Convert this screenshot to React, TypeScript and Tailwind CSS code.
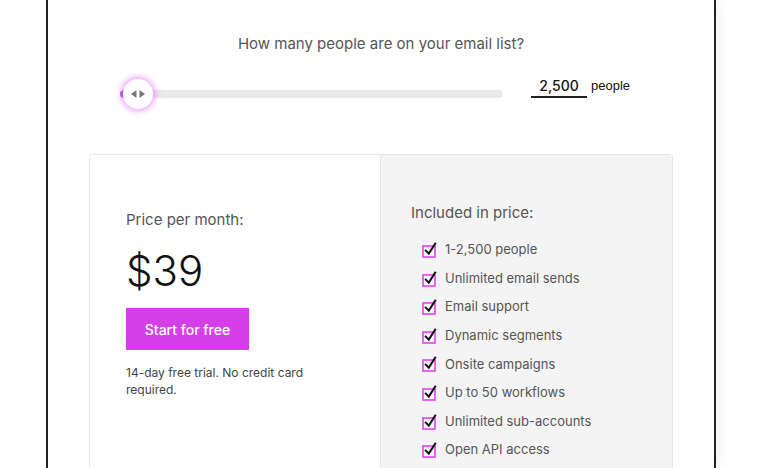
import React from "react";

const items = [
  "1-2,500 people",
  "Unlimited email sends",
  "Email support",
  "Dynamic segments",
  "Onsite campaigns",
  "Up to 50 workflows",
  "Unlimited sub-accounts",
  "Open API access",
];

function Check() {
  return (
    <svg width="16" height="16" viewBox="0 0 16 16" className="shrink-0">
      <rect x="1" y="4" width="12" height="11" fill="none" stroke="#e044ee" strokeWidth="1.6" />
      <path d="M3.8 8.6 L6.8 11.6 L13.2 1.6" fill="none" stroke="#111" strokeWidth="2" strokeLinecap="square" />
    </svg>
  );
}

export default function App() {
  return (
    <div className="w-[760px] h-[468px] overflow-hidden bg-white" style={{ fontFamily: "Inter, 'Noto Sans', sans-serif" }}>
      <div className="ml-[46px] w-[670px] h-[468px] border-x-2 border-[#222] bg-white px-[41px] shadow-[4px_0_10px_rgba(0,0,0,0.05)]">
        <div className="pt-[34px] text-center text-[15px] leading-[20px] text-[#555]">
          How many people are on your email list?
        </div>
        <div className="mt-[21px] flex items-start h-[40px]">
          <div className="relative mt-[15px] ml-[31px] w-[383px] h-[8px] rounded-full bg-[#e9e9e9]">
            <div className="absolute left-0 top-0 h-[8px] w-[10px] rounded-l-full bg-[#9b4dea]" />
            <div className="absolute left-[3px] top-[-11px] w-[30px] h-[30px] rounded-full bg-white shadow-[0_0_6px_2px_rgba(226,120,245,0.7)] flex items-center justify-center gap-[1px]">
              <svg width="16" height="10" viewBox="0 0 16 10">
                <path d="M1 5 L6.5 1 L6.5 9 Z" fill="#777" />
                <path d="M15 5 L9.5 1 L9.5 9 Z" fill="#777" />
              </svg>
            </div>
          </div>
          <div className="ml-[28px] mt-[1px] w-[56px] border-b-2 border-[#222] text-center text-[14px] font-medium leading-[20px] text-[#111]">
            2,500
          </div>
          <div className="ml-[4px] mt-[2px] text-[13px] leading-[17px] text-[#111]" style={{ fontFamily: "'Liberation Sans', Arial, sans-serif" }}>
            people
          </div>
        </div>
        <div className="mt-[39px] flex rounded-[4px] border border-[#e6e6e6] h-[330px]">
          <div className="w-[291px] border-r border-[#e6e6e6] pl-[36px] pt-[55px]">
            <div className="text-[15px] leading-[20px] text-[#555]">Price per month:</div>
            <div className="mt-[16px] text-[42px] font-light leading-[50px] text-[#111]">$39</div>
            <button className="mt-[12px] w-[123px] h-[42px] bg-[#d53fe8] text-white text-[14px] font-medium">
              Start for free
            </button>
            <div className="mt-[14px] w-[185px] text-[12px] leading-[17px] text-[#444]">
              14-day free trial. No credit card required.
            </div>
          </div>
          <div className="flex-1 bg-[#f4f4f4] pl-[30px] pt-[48px]">
            <div className="text-[15px] leading-[20px] text-[#555]">Included in price:</div>
            <div className="mt-[17px] ml-[11px] flex flex-col gap-[8.6px]">
              {items.map((t) => (
                <div key={t} className="flex items-center gap-[7px] h-[20px] text-[13px] text-[#555]">
                  <Check />
                  <span>{t}</span>
                </div>
              ))}
            </div>
          </div>
        </div>
      </div>
    </div>
  );
}
